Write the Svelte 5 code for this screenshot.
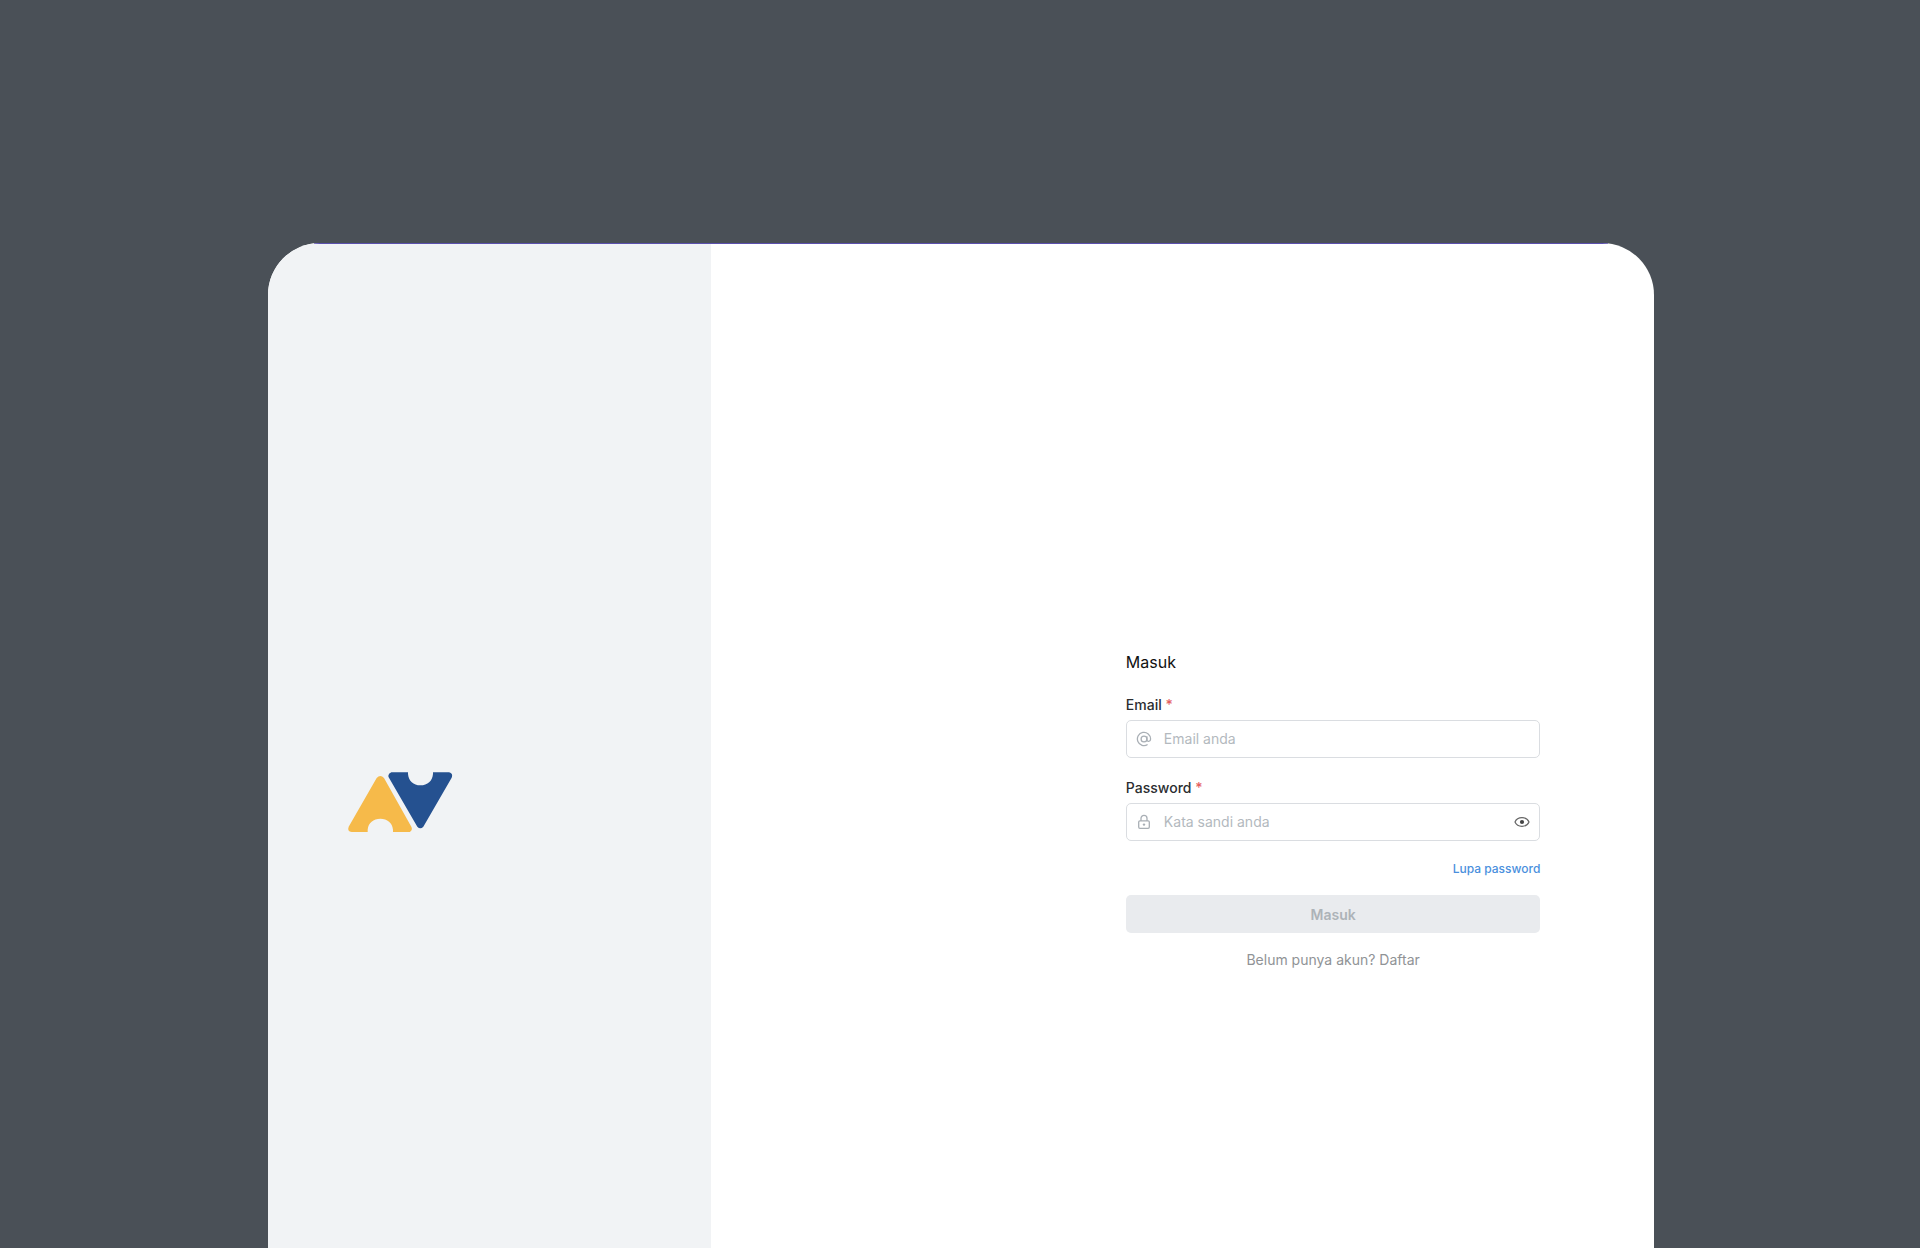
<script>
  let email = $state('');
  let password = $state('');
  let visible = $state(false);
  let ready = $derived(email.trim() !== '' && password !== '');
</script>

<div class="stage">
  <main class="card">
    <aside class="brand">
      <svg class="logo" viewBox="48 62 318 186" role="img" aria-label="AV">
        <path
          fill="#f6ba4a"
          d="M137 83Q148 71 159 83L241 229Q246 239 236 245H186V238C184 217 169 205 148 205C127 205 112 217 110 238V245H62Q48 243 53 229Z"
        />
        <path
          fill="#255190"
          d="M181 66H231V71C233 92 247 105 268 105C290 105 304 92 306 71V66H354Q367 69 362 82L277 229Q268 238 259 229L173 81Q169 71 181 66Z"
        />
      </svg>
    </aside>

    <section class="content">
      <form onsubmit={(e) => e.preventDefault()}>
        <h1>Masuk</h1>

        <div class="field">
          <label for="email">Email <span class="required">*</span></label>
          <div class="control">
            <svg class="icon" viewBox="0 0 16 16" aria-hidden="true">
              <circle cx="8" cy="8" r="2.9" />
              <path d="M10.9 5.2v3.6c0 2.4 3.7 2.2 3.7-.8A6.6 6.6 0 1 0 11.6 13.5" />
            </svg>
            <input id="email" type="email" placeholder="Email anda" bind:value={email} />
          </div>
        </div>

        <div class="field">
          <label for="password">Password <span class="required">*</span></label>
          <div class="control">
            <svg class="icon" viewBox="0 0 16 16" aria-hidden="true">
              <rect x="2.7" y="6.9" width="10.6" height="7.4" rx="1.2" />
              <path d="M5 6.9V4.3a3 3 0 0 1 6 0v2.6" />
              <circle class="dot" cx="8" cy="10.6" r="1.2" />
            </svg>
            <input
              id="password"
              type={visible ? 'text' : 'password'}
              placeholder="Kata sandi anda"
              bind:value={password}
            />
            <button
              class="reveal"
              type="button"
              aria-label="Tampilkan kata sandi"
              onclick={() => (visible = !visible)}
            >
              <svg viewBox="0 0 16 16" aria-hidden="true">
                <path d="M1 8C2.2 5.2 5 3.7 8 3.7S13.8 5.2 15 8C13.8 10.8 11 12.3 8 12.3S2.2 10.8 1 8Z" />
                <circle cx="8" cy="8" r="2.1" />
              </svg>
            </button>
          </div>
        </div>

        <a class="forgot" href="#lupa">Lupa password</a>
        <button class="submit" type="submit" disabled={!ready}>Masuk</button>
        <p class="signup">Belum punya akun? <a href="#daftar">Daftar</a></p>
      </form>
    </section>
  </main>
</div>

<style>
  :global(body) {
    background: #4a5057;
  }

  .stage {
    box-sizing: border-box;
    height: 100vh;
    padding: 243px 0 0 2px;
    overflow: hidden;
    display: flex;
    justify-content: center;
    align-items: flex-start;
    background: #4a5057;
    font-family: Inter, 'Liberation Sans', sans-serif;
  }

  .card {
    position: relative;
    width: 72.3%;
    min-height: 90vh;
    display: flex;
    border-radius: 52px;
    overflow: hidden;
    background: #fff;
  }

  .card::before {
    content: '';
    position: absolute;
    inset: 0 46px auto;
    height: 1px;
    background: #5b50ae;
  }

  .brand {
    box-sizing: border-box;
    width: 32%;
    padding: 0 0 6px 79px;
    display: flex;
    align-items: center;
    background: #f1f3f5;
  }

  .logo {
    width: 106px;
    height: 62px;
  }

  .content {
    flex: 1;
    padding: 12px 114px 0 0;
    display: flex;
    align-items: center;
    justify-content: flex-end;
  }

  form {
    width: 50%;
    display: flex;
    flex-direction: column;
  }

  h1 {
    margin: 0 0 20px;
    font-size: 16px;
    line-height: 24px;
    font-weight: 400;
    color: #111;
  }

  .field {
    margin-bottom: 19px;
  }

  label {
    display: block;
    margin-bottom: 4px;
    font-size: 14px;
    line-height: 22px;
    font-weight: 500;
    color: #2b2d30;
  }

  .required {
    color: #e5605f;
  }

  .control {
    box-sizing: border-box;
    height: 38px;
    padding: 0 9px;
    display: flex;
    align-items: center;
    gap: 12px;
    border: 1px solid #dadde1;
    border-radius: 5px;
    background: #fff;
  }

  .icon {
    flex: none;
    width: 16px;
    height: 16px;
    fill: none;
    stroke: #a9afb5;
    stroke-width: 1.3;
  }

  .icon .dot {
    fill: #a9afb5;
    stroke: none;
  }

  input {
    flex: 1;
    min-width: 0;
    padding: 0;
    border: 0;
    outline: 0;
    background: none;
    font: inherit;
    font-size: 14px;
    line-height: 22px;
    color: #2b2d30;
  }

  input::placeholder {
    color: #b3b9be;
    opacity: 1;
  }

  .reveal {
    display: flex;
    padding: 0;
    border: 0;
    background: none;
    cursor: pointer;
  }

  .reveal svg {
    width: 16px;
    height: 16px;
    fill: none;
    stroke: #666;
    stroke-width: 1.2;
  }

  .reveal circle {
    fill: #444;
    stroke: none;
  }

  .forgot {
    align-self: flex-end;
    margin-bottom: 17px;
    font-size: 12px;
    line-height: 18px;
    font-weight: 500;
    color: #4a8fdd;
    text-decoration: none;
  }

  .submit {
    height: 38px;
    margin-bottom: 16px;
    padding: 0;
    border: 0;
    border-radius: 5px;
    background: #e9ebee;
    font: inherit;
    font-size: 14px;
    font-weight: 600;
    color: #adb3b8;
  }

  .signup {
    margin: 0;
    font-size: 14px;
    line-height: 22px;
    text-align: center;
    color: #909396;
  }

  .signup a {
    color: inherit;
    text-decoration: none;
  }
</style>
